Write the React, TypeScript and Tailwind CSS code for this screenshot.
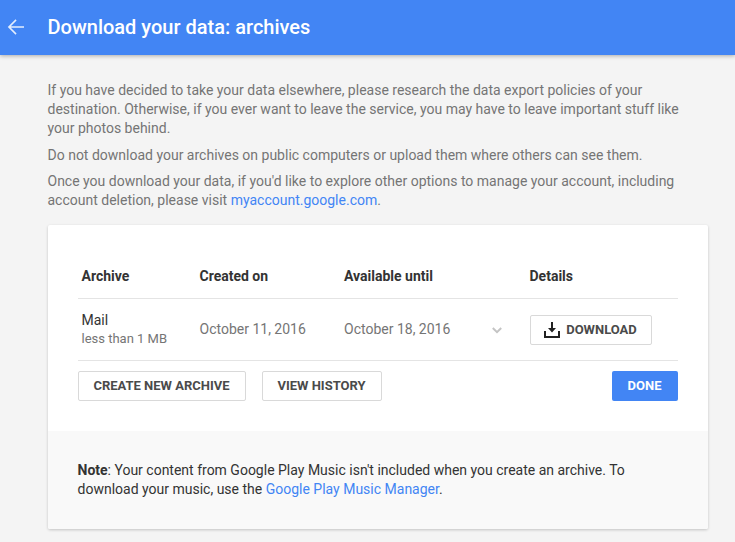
import React from 'react'

const ArrowBack = () => (
  <svg width="24" height="24" viewBox="0 0 24 24" className="ml-[4px] mb-[1px] text-white/85">
    <path d="M20 11.200H6.800l5.800-5.800-1.100-1.100L3.800 12l7.700 7.700 1.100-1.100-5.800-5.800H20z" fill="currentColor" />
  </svg>
)

const ChevronDown = () => (
  <svg width="10" height="7" viewBox="0 0 10 7" className="ml-[1px] text-[#c4c4c4]">
    <path d="M.8 1 5 5.200 9.200 1" fill="none" stroke="currentColor" strokeWidth="2" />
  </svg>
)

const DownloadIcon = () => (
  <svg width="16" height="16" viewBox="0 0 16 16" className="text-[#212121]">
    <path d="M7 0h2v6h3L8 10.500 4 6h3z" fill="currentColor" />
    <path d="M1 9v6h14V9" fill="none" stroke="currentColor" strokeWidth="2" />
  </svg>
)

const OutlineButton = ({ className, children }: { className: string; children: React.ReactNode }) => (
  <button className={`h-[30px] flex items-center justify-center pr-[1px] bg-white border border-[#d9d9d9] rounded-[2px] text-[13px] font-bold text-[#4a4a4a] ${className}`}>
    {children}
  </button>
)

export default function App() {
  return (
    <div className="h-[542px] overflow-hidden bg-[#f4f4f4] font-['Roboto',sans-serif] text-[14px]">
      {/* Header */}
      <div className="h-[55px] bg-[#4285f4] flex items-center shadow-[0_1px_4px_rgba(0,0,0,0.3)]">
        <ArrowBack />
        <h1 className="ml-[19.5px] pb-[2px] text-[20px] font-medium text-white">Download your data: archives</h1>
      </div>

      <div className="ml-[48px] w-[660px] pt-[26px]">
        {/* Intro */}
        <div className="-ml-[0.5px] text-[#757575] leading-[19px]">
          <p className="mb-[7.5px]">
            If you have decided to take your data elsewhere, please research the data export policies of your destination. Otherwise, if you ever want to leave the service, you may have to leave important stuff like your photos behind.
          </p>
          <p className="mb-[7px]">Do not download your archives on public computers or upload them where others can see them.</p>
          <p>
            Once you download your data, if you'd like to explore other options to manage your account, including account deletion, please visit <a className="text-[#4285f4]">myaccount.google.com</a>.
          </p>
        </div>

        {/* Card */}
        <div className="mt-[15.500px] bg-white rounded-[2px] shadow-[0_1px_3px_rgba(0,0,0,0.2)] overflow-hidden">
          <div className="px-[30px] pt-[37px] h-[206px]">
            <div className="h-[37px] flex items-center pb-[8px] pl-[3.500px] font-bold text-[#333] border-b border-[#e4e4e4] text-[14px]">
              <span className="w-[118px]">Archive</span>
              <span className="w-[144.500px]">Created on</span>
              <span className="w-[185.500px]">Available until</span>
              <span>Details</span>
            </div>
            <div className="h-[62px] flex items-center pl-[3.500px] border-b border-[#e4e4e4]">
              <div className="w-[118px]">
                <div className="text-[#333] leading-[19px]">Mail</div>
                <div className="text-[13px] text-[#757575] leading-[18px]">less than 1 MB</div>
              </div>
              <span className="w-[144.500px] text-[#757575]">October 11, 2016</span>
              <span className="w-[147px] text-[#757575]">October 18, 2016</span>
              <span className="w-[39px] flex pt-[2px]"><ChevronDown /></span>
              <OutlineButton className="w-[122px] gap-[6px]">
                <DownloadIcon />
                DOWNLOAD
              </OutlineButton>
            </div>
            <div className="flex items-center mt-[10px]">
              <OutlineButton className="w-[168px]">CREATE NEW ARCHIVE</OutlineButton>
              <OutlineButton className="w-[120px] ml-[16px]">VIEW HISTORY</OutlineButton>
              <button className="ml-auto w-[66px] h-[30px] pr-[1px] bg-[#4285f4] rounded-[2px] text-white text-[13px] font-bold">DONE</button>
            </div>
          </div>

          {/* Note */}
          <div className="h-[98px] bg-[#f9f9f9] pl-[29.500px] pr-[30px] pt-[30px] text-[#333] leading-[19px]">
            <b className="font-bold">Note</b>: Your content from Google Play Music isn't included when you create an archive. To download your music, use the <a className="text-[#4285f4]">Google Play Music Manager</a>.
          </div>
        </div>
      </div>
    </div>
  )
}
